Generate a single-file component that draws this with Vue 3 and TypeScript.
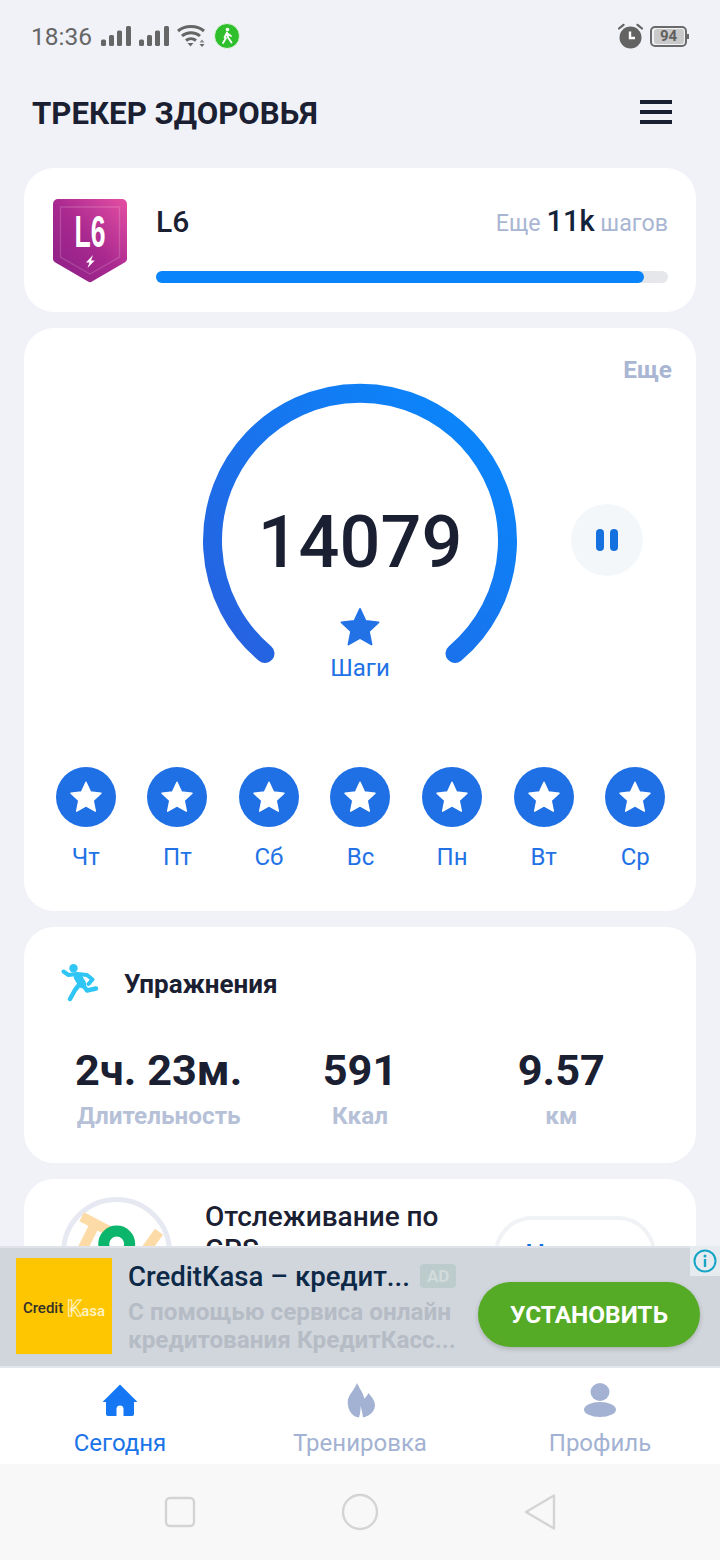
<script setup lang="ts">
const weekDays = ['Чт', 'Пт', 'Сб', 'Вс', 'Пн', 'Вт', 'Ср']

const stats = [
  { value: '2ч. 23м.', label: 'Длительность' },
  { value: '591', label: 'Ккал' },
  { value: '9.57', label: 'км' },
]

const levelProgress = 95.3
const starPath = 'M12 1.6l3.2 6.9 7.4.9-5.5 5.1 1.5 7.5L12 18.3l-6.6 3.7 1.5-7.5L1.4 9.4l7.4-.9z'
</script>

<template>
  <div class="page">
    <div class="status-bar">
      <div class="status-group">
        <span class="status-time">18:36</span>
        <svg width="30" height="20" viewBox="0 0 30 20" fill="#666">
          <rect x="0" y="13.500" width="5" height="6.500" rx="1.500" />
          <rect x="8" y="9" width="5" height="11" rx="1.500" />
          <rect x="16" y="4.500" width="5" height="15.500" rx="1.500" />
          <rect x="25" y="0" width="5" height="20" rx="1.500" />
        </svg>
        <svg width="30" height="20" viewBox="0 0 30 20" fill="#666">
          <rect x="0" y="13.500" width="5" height="6.500" rx="1.500" />
          <rect x="8" y="9" width="5" height="11" rx="1.500" />
          <rect x="16" y="4.500" width="5" height="15.500" rx="1.500" />
          <rect x="25" y="0" width="5" height="20" rx="1.500" />
        </svg>
        <svg class="wifi" width="28" height="22" viewBox="0 0 28 22" fill="none" stroke="#666" stroke-width="3">
          <path d="M1 6C8 0 20 0 27 6" />
          <path d="M5 11C10 6.500 18 6.500 23 11" />
          <path d="M9 15.500C12 13 16 13 19 15.500" />
          <path d="M10.500 18h6l-3 3.500z" fill="#666" stroke="none" />
          <path d="M25 14.500l2.500 3h-5z" fill="#888" stroke="none" />
          <path d="M22.500 19h5L25 22z" fill="#666" stroke="none" />
        </svg>
        <svg class="walker" width="26" height="26" viewBox="0 0 26 26">
          <circle cx="13" cy="13" r="12.500" fill="#2fbf2c" stroke="#e4f2e2" stroke-width="1" />
          <circle cx="13.500" cy="6.500" r="1.800" fill="#fff" />
          <path d="M13 9.500l-2.500 5M13 9.500l1 5 3.500 5M12 15l-3 5M13.400 10.500l3.600 2.500" fill="none" stroke="#fff" stroke-width="1.800" stroke-linecap="round" />
        </svg>
      </div>
      <div class="status-group status-right">
        <svg width="26" height="26" viewBox="0 0 26 26">
          <circle cx="12.500" cy="14.500" r="11" fill="#636363" />
          <path d="M1 5.500L5.500 1.800M24 5.500L19.500 1.800" stroke="#636363" stroke-width="2.200" stroke-linecap="round" />
          <path d="M12 8.500v6.500h5" fill="none" stroke="#fff" stroke-width="2.400" />
        </svg>
        <div class="battery">
          <span class="battery-level">94</span>
          <span class="battery-cap"></span>
        </div>
      </div>
    </div>

    <header class="top-bar">
      <h1 class="page-title">ТРЕКЕР ЗДОРОВЬЯ</h1>
      <div class="menu-button">
        <span></span>
        <span></span>
        <span></span>
      </div>
    </header>

    <main class="feed">
      <section class="card level-card">
        <svg class="level-badge" width="74" height="84" viewBox="0 0 74 84">
          <defs>
            <linearGradient id="badgeFill" x1="1" y1="0" x2="0" y2="1">
              <stop offset="0" stop-color="#e54fa3" />
              <stop offset=".5" stop-color="#a9298f" />
              <stop offset="1" stop-color="#8a1f86" />
            </linearGradient>
          </defs>
          <path d="M5 0h64a5 5 0 0 1 5 5v55a4 4 0 0 1-2.400 3.600L39 82.600a4 4 0 0 1-4 0L2.400 63.600A4 4 0 0 1 0 60V5a5 5 0 0 1 5-5z" fill="url(#badgeFill)" />
          <path d="M7.500 8h59v50L37 75 7.500 58z" fill="none" stroke="#fff" stroke-opacity=".16" stroke-width="1.400" />
          <text class="badge-text" x="37" y="48" text-anchor="middle" textLength="31" lengthAdjust="spacingAndGlyphs">L6</text>
          <path d="M40 56l-7 7.500h3.500l-2 5.500 7.200-7.500h-3.600z" fill="#fff" />
        </svg>
        <div class="level-body">
          <div class="level-head">
            <span class="level-name">L6</span>
            <span class="level-remain">Еще <b>11k</b> шагов</span>
          </div>
          <div class="progress-track">
            <div class="progress-fill" :style="{ width: levelProgress + '%' }"></div>
          </div>
        </div>
      </section>

      <section class="card steps-card">
        <div class="more-link">Еще</div>
        <div class="gauge-row">
          <div class="gauge">
            <svg width="316" height="284" viewBox="0 0 316 284" fill="none">
              <defs>
                <linearGradient id="ringFill" gradientUnits="userSpaceOnUse" x1="290" y1="50" x2="50" y2="280">
                  <stop offset="0" stop-color="#0a86fb" />
                  <stop offset="1" stop-color="#2662e0" />
                </linearGradient>
              </defs>
              <path d="M63 270.500A147.500 147.500 0 1 1 253 270.500" stroke="url(#ringFill)" stroke-width="19" stroke-linecap="round" />
            </svg>
            <div class="gauge-center">
              <div class="step-count">14079</div>
              <svg class="gauge-star" width="42" height="42" viewBox="0 0 24 24" fill="#2272e6">
                <path :d="starPath" stroke="#2272e6" stroke-width="1" stroke-linejoin="round" />
              </svg>
              <div class="gauge-label">Шаги</div>
            </div>
          </div>
          <button class="pause-button" type="button">
            <span></span>
            <span></span>
          </button>
        </div>
        <div class="week-row">
          <div v-for="day in weekDays" :key="day" class="week-day">
            <div class="day-dot">
              <svg width="34" height="34" viewBox="0 0 24 24" fill="#fff">
                <path :d="starPath" stroke="#fff" stroke-width="1" stroke-linejoin="round" />
              </svg>
            </div>
            <span class="day-name">{{ day }}</span>
          </div>
        </div>
      </section>

      <section class="card exercise-card">
        <div class="exercise-head">
          <svg width="40" height="40" viewBox="60 964 40 40" fill="none" stroke="#2fc5f5" stroke-linecap="round" stroke-linejoin="round">
            <circle cx="73.500" cy="968.300" r="4.200" fill="#2fc5f5" stroke="none" />
            <path d="M63.500 971.500L68.500 975 77 974l10 1 5.500 4.500-4 4.500" stroke-width="4" />
            <path d="M78 977l4 7" stroke-width="8.500" />
            <path d="M83 985l4 5.500 9-2" stroke-width="4.500" />
            <path d="M79 985l-4 5-5 9" stroke-width="4.500" />
          </svg>
          <span class="exercise-title">Упражнения</span>
        </div>
        <div class="stat-row">
          <div v-for="stat in stats" :key="stat.label" class="stat">
            <div class="stat-value">{{ stat.value }}</div>
            <div class="stat-label">{{ stat.label }}</div>
          </div>
        </div>
      </section>

      <section class="card gps-card">
        <svg class="gps-map" width="111" height="111" viewBox="0 0 111 111" fill="none">
          <circle cx="55.500" cy="55.500" r="53" stroke="#e7e9f2" stroke-width="5" />
          <path d="M20.700 19.700L50 35M32 31L21 53M98 34.700L84 54" stroke="#fddba6" stroke-width="10" />
          <circle cx="55.700" cy="47" r="13" stroke="#0bb56b" stroke-width="11" />
        </svg>
        <div class="gps-text">Отслеживание по GPS</div>
        <button class="gps-button" type="button">Начать</button>
      </section>
    </main>

    <aside class="ad-banner">
      <div class="ad-logo">
        <span class="ad-logo-dark">Credit</span>
        <span class="ad-logo-light"><i>K</i>asa</span>
      </div>
      <div class="ad-copy">
        <div class="ad-title-row">
          <span class="ad-title">CreditKasa – кредит...</span>
          <span class="ad-tag">AD</span>
        </div>
        <p class="ad-desc">С помощью сервиса онлайн кредитования КредитКасс...</p>
      </div>
      <button class="ad-install" type="button">УСТАНОВИТЬ</button>
      <div class="ad-info">
        <svg width="24" height="24" viewBox="0 0 24 24" fill="none">
          <circle cx="12" cy="12" r="10.500" stroke="#16a5c6" stroke-width="2" />
          <circle cx="12" cy="7" r="1.500" fill="#16a5c6" />
          <rect x="10.800" y="10" width="2.400" height="8" fill="#16a5c6" />
        </svg>
      </div>
    </aside>

    <nav class="tab-bar">
      <div class="tab tab-active">
        <svg width="36" height="36" viewBox="0 0 36 36" fill="#1677f5">
          <path d="M18 2.500L35.500 20H32v12a2 2 0 0 1-2 2h-8.500v-7a3.500 3.500 0 0 0-7 0v7H6a2 2 0 0 1-2-2V20H.5z" />
        </svg>
        <span>Сегодня</span>
      </div>
      <div class="tab">
        <svg width="36" height="36" viewBox="0 0 36 36" fill="#a3b2d2">
          <path d="M15 1C17 6 21 10 22.300 16.700 23.500 15 25.500 13.500 26.300 11 30 15 33 19 33 23 33 29 28 34 21 35.500 20.500 31 19.500 27 18.500 24 18.800 28 18 32 17 35.500 11 35 5.700 29 5.700 20 5.700 13 12 9 15 1z" />
        </svg>
        <span>Тренировка</span>
      </div>
      <div class="tab">
        <svg width="36" height="36" viewBox="0 0 36 36" fill="#a3b2d2">
          <ellipse cx="18" cy="10" rx="9.500" ry="9" />
          <ellipse cx="18" cy="27.500" rx="16" ry="7.500" />
        </svg>
        <span>Профиль</span>
      </div>
    </nav>

    <footer class="system-nav">
      <svg width="34" height="34" viewBox="0 0 34 34" fill="none" stroke="#d4d4d4" stroke-width="2.400">
        <rect x="3" y="3" width="28" height="28" rx="4" />
      </svg>
      <svg width="38" height="38" viewBox="0 0 38 38" fill="none" stroke="#d4d4d4" stroke-width="2.400">
        <circle cx="19" cy="19" r="17" />
      </svg>
      <svg width="34" height="38" viewBox="0 0 34 38" fill="none" stroke="#d4d4d4" stroke-width="2.400" stroke-linejoin="round">
        <path d="M31 2.500v33L3 19z" />
      </svg>
    </footer>
  </div>
</template>

<style>
body {
  background: #f0f2f7;
}
</style>

<style scoped>
.page {
  position: relative;
  display: flex;
  flex-direction: column;
  width: 720px;
  height: 1560px;
  overflow: hidden;
  background: #f0f2f7;
  font-family: Roboto, "Noto Sans", sans-serif;
  color: #1a2032;
}

.status-bar {
  display: flex;
  align-items: center;
  justify-content: space-between;
  height: 72px;
  padding: 0 31px;
}

.status-group {
  display: flex;
  align-items: center;
  gap: 8px;
}

.status-right {
  gap: 6px;
}

.status-time {
  margin-right: 1px;
  font-size: 24.500px;
  color: #666;
}

.walker {
  margin-left: 1px;
}

.battery {
  position: relative;
  display: flex;
  align-items: center;
  justify-content: center;
  width: 37px;
  height: 21px;
  margin-right: 2px;
  border: 2px solid #6a6a6a;
  border-radius: 5px;
  box-sizing: border-box;
}

.battery-level {
  width: 30px;
  height: 15px;
  border-radius: 3px;
  background: #c9c9c9;
  font-size: 15px;
  font-weight: 700;
  line-height: 15px;
  text-align: center;
  color: #5f5f5f;
}

.battery-cap {
  position: absolute;
  right: -4px;
  top: 6px;
  width: 2px;
  height: 5px;
  background: #6a6a6a;
}

.top-bar {
  display: flex;
  align-items: center;
  justify-content: space-between;
  height: 84px;
  padding: 0 48px 2px 32px;
  margin-bottom: 12px;
  box-sizing: border-box;
}

.page-title {
  margin: 0;
  font-size: 31.200px;
  font-weight: 700;
  white-space: nowrap;
}

.menu-button {
  display: flex;
  flex-direction: column;
  gap: 6px;
  margin-top: -2px;
}

.menu-button span {
  width: 32px;
  height: 4px;
  background: #1a2032;
}

.feed {
  display: flex;
  flex: 1;
  flex-direction: column;
  gap: 16px;
  min-height: 0;
  padding: 0 24px;
  overflow: hidden;
}

.card {
  flex-shrink: 0;
  border-radius: 30px;
  background: #fff;
  box-sizing: border-box;
}

.level-card {
  display: flex;
  gap: 29px;
  height: 144px;
  padding: 31px 28px 0 29px;
}

.level-badge {
  flex-shrink: 0;
}

.badge-text {
  font-family: "Liberation Sans", sans-serif;
  font-size: 45px;
  font-weight: 700;
  fill: #fff;
}

.level-body {
  flex: 1;
}

.level-head {
  display: flex;
  align-items: center;
  justify-content: space-between;
  height: 44px;
}

.level-name {
  font-size: 30px;
  font-weight: 500;
}

.level-remain {
  font-size: 23.300px;
  color: #a9b6d3;
}

.level-remain b {
  font-size: 29px;
  font-weight: 500;
  color: #14233c;
}

.progress-track {
  height: 12px;
  margin-top: 28px;
  border-radius: 6px;
  background: #e5e7ea;
}

.progress-fill {
  height: 100%;
  border-radius: 6px;
  background: #0a84fb;
}

.steps-card {
  height: 583px;
  padding: 28px 24px 0 16px;
}

.more-link {
  font-size: 24.400px;
  font-weight: 700;
  line-height: 28px;
  text-align: right;
  color: #a9b6d3;
}

.gauge-row {
  position: relative;
  display: flex;
  justify-content: center;
  height: 284px;
  margin: -1px -8px 0 0;
}

.gauge {
  position: relative;
  width: 316px;
  height: 284px;
}

.gauge-center {
  position: absolute;
  left: 0;
  right: 0;
  top: 117px;
  display: flex;
  flex-direction: column;
  align-items: center;
}

.step-count {
  font-size: 72px;
  font-weight: 500;
  line-height: 86px;
}

.gauge-star {
  margin-top: 20px;
}

.gauge-label {
  margin-top: 6px;
  font-size: 24px;
  line-height: 28px;
  color: #2272e6;
}

.pause-button {
  position: absolute;
  left: 531px;
  top: 121px;
  display: flex;
  align-items: center;
  justify-content: center;
  gap: 6px;
  width: 72px;
  height: 72px;
  padding: 0;
  border: 0;
  border-radius: 50%;
  background: #f4f7fa;
}

.pause-button span {
  width: 8px;
  height: 22px;
  border-radius: 4px;
  background: #1570e0;
}

.week-row {
  display: grid;
  grid-template-columns: repeat(7, 1fr);
  margin: 100px -9px 0 0;
}

.week-day {
  display: flex;
  flex-direction: column;
  align-items: center;
  gap: 16px;
}

.day-dot {
  display: flex;
  align-items: center;
  justify-content: center;
  width: 60px;
  height: 60px;
  border-radius: 50%;
  background: #1f6fe5;
}

.day-name {
  font-size: 24px;
  line-height: 28px;
  color: #2272e6;
}

.exercise-card {
  height: 236px;
  padding: 37px 34px 0;
}

.exercise-head {
  display: flex;
  align-items: center;
  gap: 24px;
  padding-left: 2px;
  height: 40px;
}

.exercise-title {
  font-size: 26px;
  font-weight: 700;
}

.stat-row {
  display: grid;
  grid-template-columns: repeat(3, 1fr);
  margin-top: 42px;
}

.stat {
  text-align: center;
}

.stat-value {
  font-size: 43.300px;
  font-weight: 700;
  line-height: 50px;
  white-space: nowrap;
}

.stat-label {
  margin-top: 5px;
  font-size: 24.300px;
  font-weight: 700;
  line-height: 30px;
  color: #b6c1d8;
}

.gps-card {
  display: flex;
  gap: 33px;
  height: 200px;
  padding: 18px 40px 0 37px;
}

.gps-map {
  flex-shrink: 0;
}

.gps-text {
  width: 250px;
  padding-top: 3px;
  font-size: 28px;
  font-weight: 500;
  line-height: 33px;
}

.gps-button {
  flex-shrink: 0;
  width: 162px;
  height: 76px;
  margin: 19px 0 0 auto;
  padding: 0 5px 0 0;
  border: 4px solid #f0f2f6;
  border-radius: 38px;
  background: #fff;
  font-family: inherit;
  font-size: 28px;
  font-weight: 500;
  color: #1570e0;
}

.ad-banner {
  position: absolute;
  left: 0;
  right: 0;
  top: 1246px;
  display: flex;
  gap: 16px;
  height: 122px;
  padding: 12px 20px 0 16px;
  box-sizing: border-box;
  border-top: 2px solid #dfe3e9;
  border-bottom: 2px solid #e3e6ea;
  background: #d1d6dc;
}

.ad-logo {
  display: flex;
  flex-shrink: 0;
  align-items: center;
  justify-content: center;
  gap: 4px;
  width: 96px;
  height: 96px;
  padding-top: 4px;
  margin-top: -2px;
  box-sizing: border-box;
  background: #fec601;
  font-size: 15px;
  font-weight: 500;
}

.ad-logo-dark {
  color: #33302a;
}

.ad-logo-light {
  color: #fff3c4;
}

.ad-logo-light i {
  font-size: 22px;
  font-style: normal;
  font-weight: 700;
  color: transparent;
  -webkit-text-stroke: 1px #fff3c4;
}

.ad-copy {
  flex: 1;
  min-width: 0;
  margin-top: -2px;
}

.ad-title-row {
  display: flex;
  align-items: center;
  gap: 10px;
  height: 36px;
}

.ad-title {
  font-size: 27.600px;
  font-weight: 500;
  white-space: nowrap;
  color: #0c2947;
}

.ad-tag {
  padding: 0 7px;
  border-radius: 4px;
  background: #bccbcb;
  font-size: 17px;
  font-weight: 700;
  line-height: 24px;
  color: #d2dbdb;
}

.ad-desc {
  width: 334px;
  margin: 4px 0 0;
  font-size: 24.300px;
  font-weight: 700;
  line-height: 28px;
  color: #b6bcc5;
}

.ad-install {
  align-self: flex-start;
  flex-shrink: 0;
  width: 222px;
  height: 65px;
  margin-top: 22px;
  padding: 0;
  border: 0;
  border-radius: 33px;
  background: #55ab26;
  box-shadow: 0 2px 5px rgba(0, 0, 0, .18);
  font-family: inherit;
  font-size: 24.400px;
  font-weight: 700;
  color: #fff;
}

.ad-info {
  position: absolute;
  right: 0;
  top: -2px;
  display: flex;
  align-items: center;
  justify-content: center;
  width: 30px;
  height: 30px;
  background: #e6ebef;
}

.tab-bar {
  display: grid;
  flex-shrink: 0;
  grid-template-columns: repeat(3, 1fr);
  height: 96px;
  background: #fff;
}

.tab {
  display: flex;
  flex-direction: column;
  align-items: center;
  padding-top: 14px;
  font-size: 24px;
  line-height: 28px;
  color: #a3b2d2;
}

.tab span {
  margin-top: 11px;
}

.tab-active {
  color: #1b74e8;
}

.system-nav {
  display: flex;
  flex-shrink: 0;
  align-items: center;
  justify-content: center;
  gap: 144px;
  height: 96px;
  background: #f8f8f8;
}
</style>
